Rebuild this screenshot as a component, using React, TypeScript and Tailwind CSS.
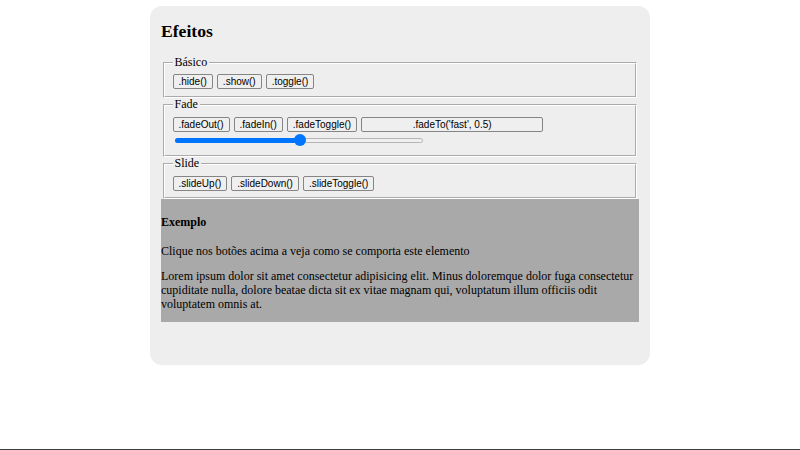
import React from "react";

const serif = { fontFamily: '"Liberation Serif", "Times New Roman", serif' };
const sans = { fontFamily: '"Liberation Sans", Arial, sans-serif' };

function Btn({ children, wide }: { children: React.ReactNode; wide?: boolean }) {
  return (
    <button
      style={sans}
      className={
        "h-[15px] flex items-center justify-center px-[5px] rounded-[2px] border border-[#858585] bg-[#efefef] text-[10px] leading-[12px] text-black whitespace-nowrap " +
        (wide ? "w-[182px]" : "")
      }
    >
      {children}
    </button>
  );
}

function Group({ title, children, pt, pb }: { title: string; children: React.ReactNode; pt: string; pb: string }) {
  return (
    <fieldset
      className={
        "mx-[2px] border-2 [border-style:groove] border-white px-[7.5px] " + pt + " " + pb
      }
    >
      <legend className="px-[2px] text-[12px] leading-[13.8px] text-black">{title}</legend>
      {children}
    </fieldset>
  );
}

export default function App() {
  return (
    <div style={serif} className="w-[800px] h-[450px] bg-white flex flex-col overflow-hidden">
      <div className="ml-[150px] mt-[6px] w-[500px] h-[359px] rounded-[12px] bg-[#eeeeee] px-[11px] pt-[15px]">
        <h2 className="text-[17.6px] leading-[20px] font-bold text-black mb-[15px]">Efeitos</h2>
        <Group title="Básico" pt="pt-[4.5px]" pb="pb-[7px]">
          <div className="flex gap-[4px]">
            <Btn>.hide()</Btn>
            <Btn>.show()</Btn>
            <Btn>.toggle()</Btn>
          </div>
        </Group>
        <Group title="Fade" pt="pt-[5px]" pb="pb-[9px]">
          <div className="flex gap-[4px]">
            <Btn>.fadeOut()</Btn>
            <Btn>.fadeIn()</Btn>
            <Btn>.fadeToggle()</Btn>
            <Btn wide>.fadeTo('fast', 0.5)</Btn>
          </div>
          <div className="relative mt-[2px] ml-[2px] w-[248px] h-[12px] flex items-center">
            <div className="h-[5px] w-full rounded-full border border-[#b5b5b5] bg-[#efefef]" />
            <div className="absolute left-0 top-[3.5px] h-[5px] w-[125px] rounded-full bg-[#0075ff]" />
            <div className="absolute left-[119px] top-0 w-[12px] h-[12px] rounded-full bg-[#0075ff]" />
          </div>
        </Group>
        <Group title="Slide" pt="pt-[5.5px]" pb="pb-[6px]">
          <div className="flex gap-[4px]">
            <Btn>.slideUp()</Btn>
            <Btn>.slideDown()</Btn>
            <Btn>.slideToggle()</Btn>
          </div>
        </Group>
        <div className="bg-[#a9a9a9] h-[123px] pt-[17px] text-[12px] text-black">
          <h4 className="font-bold leading-[13.8px] mb-[14.5px]">Exemplo</h4>
          <p className="leading-[13.8px] mb-[12px]">Clique nos botões acima a veja como se comporta este elemento</p>
          <p className="leading-[13.6px]">
            Lorem ipsum dolor sit amet consectetur adipisicing elit. Minus doloremque dolor fuga consectetur
            cupiditate nulla, dolore beatae dicta sit ex vitae magnam qui, voluptatum illum officiis odit
            voluptatem omnis at.
          </p>
        </div>
      </div>
      <div className="mt-auto h-[1px] w-full bg-[#3c3e44]" />
    </div>
  );
}
